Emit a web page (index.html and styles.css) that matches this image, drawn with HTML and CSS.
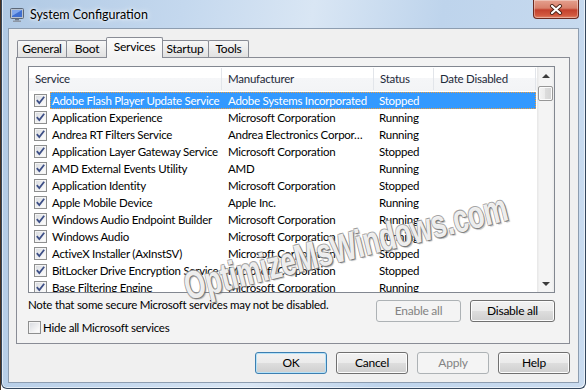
FILE: index.html
```html
<!DOCTYPE html>
<html>
<head>
<meta charset="utf-8">
<link rel="stylesheet" href="styles.css">
</head>
<body>
<div class="window">
  <div class="titlebar">
    <svg class="appicon" width="14" height="14" viewBox="0 0 14 14">
      <rect x="0.5" y="0.5" width="13" height="10" rx="1" fill="#b8c2cf" stroke="#5c6878"/>
      <rect x="2" y="2" width="10" height="7" fill="#3f6fd0"/>
      <path d="M2 2 L12 2 L2 8 Z" fill="#7fa6ec"/>
      <rect x="5" y="11" width="4" height="1.5" fill="#6b7686"/>
      <rect x="3" y="12.5" width="8" height="1.5" fill="#8d97a5"/>
    </svg>
    <span class="title">System Configuration</span>
    <div class="close">
      <svg width="14" height="11" viewBox="0 0 14 11">
        <path d="M3 2 L11 9 M11 2 L3 9" stroke="#4b2418" stroke-width="4" stroke-linecap="round"/>
        <path d="M3 2 L11 9 M11 2 L3 9" stroke="#ffffff" stroke-width="2.2" stroke-linecap="round"/>
      </svg>
    </div>
  </div>
  <div class="client">
    <div class="tabs">
      <div class="tab t-general">General</div>
      <div class="tab t-boot">Boot</div>
      <div class="tab t-services active">Services</div>
      <div class="tab t-startup">Startup</div>
      <div class="tab t-tools">Tools</div>
    </div>
    <div class="panel">
      <div class="listbox">
        <div class="lv">
          <div class="lv-head">
            <div class="h h-svc">Service</div>
            <div class="h h-man">Manufacturer</div>
            <div class="h h-st">Status</div>
            <div class="h h-date">Date Disabled</div>
          </div>
          <div class="lv-rows">
            <div class="row selected">
              <div class="cbcell"><span class="cb"><svg width="11" height="11" viewBox="0 0 11 11"><path d="M1.8 5.2 L4.3 8 L9.2 1.8" stroke="#3d4f86" stroke-width="1.8" fill="none"/></svg></span></div>
              <div class="cells"><div class="c c-svc">Adobe Flash Player Update Service</div><div class="c c-man">Adobe Systems Incorporated</div><div class="c c-st">Stopped</div><div class="c c-date"></div></div>
            </div>
            <div class="row">
              <div class="cbcell"><span class="cb"><svg width="11" height="11" viewBox="0 0 11 11"><path d="M1.8 5.2 L4.3 8 L9.2 1.8" stroke="#3d4f86" stroke-width="1.8" fill="none"/></svg></span></div>
              <div class="cells"><div class="c c-svc">Application Experience</div><div class="c c-man">Microsoft Corporation</div><div class="c c-st">Running</div><div class="c c-date"></div></div>
            </div>
            <div class="row">
              <div class="cbcell"><span class="cb"><svg width="11" height="11" viewBox="0 0 11 11"><path d="M1.8 5.2 L4.3 8 L9.2 1.8" stroke="#3d4f86" stroke-width="1.8" fill="none"/></svg></span></div>
              <div class="cells"><div class="c c-svc">Andrea RT Filters Service</div><div class="c c-man">Andrea Electronics Corpor…</div><div class="c c-st">Running</div><div class="c c-date"></div></div>
            </div>
            <div class="row">
              <div class="cbcell"><span class="cb"><svg width="11" height="11" viewBox="0 0 11 11"><path d="M1.8 5.2 L4.3 8 L9.2 1.8" stroke="#3d4f86" stroke-width="1.8" fill="none"/></svg></span></div>
              <div class="cells"><div class="c c-svc">Application Layer Gateway Service</div><div class="c c-man">Microsoft Corporation</div><div class="c c-st">Stopped</div><div class="c c-date"></div></div>
            </div>
            <div class="row">
              <div class="cbcell"><span class="cb"><svg width="11" height="11" viewBox="0 0 11 11"><path d="M1.8 5.2 L4.3 8 L9.2 1.8" stroke="#3d4f86" stroke-width="1.8" fill="none"/></svg></span></div>
              <div class="cells"><div class="c c-svc">AMD External Events Utility</div><div class="c c-man">AMD</div><div class="c c-st">Running</div><div class="c c-date"></div></div>
            </div>
            <div class="row">
              <div class="cbcell"><span class="cb"><svg width="11" height="11" viewBox="0 0 11 11"><path d="M1.8 5.2 L4.3 8 L9.2 1.8" stroke="#3d4f86" stroke-width="1.8" fill="none"/></svg></span></div>
              <div class="cells"><div class="c c-svc">Application Identity</div><div class="c c-man">Microsoft Corporation</div><div class="c c-st">Stopped</div><div class="c c-date"></div></div>
            </div>
            <div class="row">
              <div class="cbcell"><span class="cb"><svg width="11" height="11" viewBox="0 0 11 11"><path d="M1.8 5.2 L4.3 8 L9.2 1.8" stroke="#3d4f86" stroke-width="1.8" fill="none"/></svg></span></div>
              <div class="cells"><div class="c c-svc">Apple Mobile Device</div><div class="c c-man">Apple Inc.</div><div class="c c-st">Running</div><div class="c c-date"></div></div>
            </div>
            <div class="row">
              <div class="cbcell"><span class="cb"><svg width="11" height="11" viewBox="0 0 11 11"><path d="M1.8 5.2 L4.3 8 L9.2 1.8" stroke="#3d4f86" stroke-width="1.8" fill="none"/></svg></span></div>
              <div class="cells"><div class="c c-svc">Windows Audio Endpoint Builder</div><div class="c c-man">Microsoft Corporation</div><div class="c c-st">Running</div><div class="c c-date"></div></div>
            </div>
            <div class="row">
              <div class="cbcell"><span class="cb"><svg width="11" height="11" viewBox="0 0 11 11"><path d="M1.8 5.2 L4.3 8 L9.2 1.8" stroke="#3d4f86" stroke-width="1.8" fill="none"/></svg></span></div>
              <div class="cells"><div class="c c-svc">Windows Audio</div><div class="c c-man">Microsoft Corporation</div><div class="c c-st">Running</div><div class="c c-date"></div></div>
            </div>
            <div class="row">
              <div class="cbcell"><span class="cb"><svg width="11" height="11" viewBox="0 0 11 11"><path d="M1.8 5.2 L4.3 8 L9.2 1.8" stroke="#3d4f86" stroke-width="1.8" fill="none"/></svg></span></div>
              <div class="cells"><div class="c c-svc">ActiveX Installer (AxInstSV)</div><div class="c c-man">Microsoft Corporation</div><div class="c c-st">Stopped</div><div class="c c-date"></div></div>
            </div>
            <div class="row">
              <div class="cbcell"><span class="cb"><svg width="11" height="11" viewBox="0 0 11 11"><path d="M1.8 5.2 L4.3 8 L9.2 1.8" stroke="#3d4f86" stroke-width="1.8" fill="none"/></svg></span></div>
              <div class="cells"><div class="c c-svc">BitLocker Drive Encryption Service</div><div class="c c-man">Microsoft Corporation</div><div class="c c-st">Stopped</div><div class="c c-date"></div></div>
            </div>
            <div class="row">
              <div class="cbcell"><span class="cb"><svg width="11" height="11" viewBox="0 0 11 11"><path d="M1.8 5.2 L4.3 8 L9.2 1.8" stroke="#3d4f86" stroke-width="1.8" fill="none"/></svg></span></div>
              <div class="cells"><div class="c c-svc">Base Filtering Engine</div><div class="c c-man">Microsoft Corporation</div><div class="c c-st">Running</div><div class="c c-date"></div></div>
            </div>
          </div>
        </div>
        <div class="scrollbar">
          <div class="sb-arrow"><span class="tri-up"></span></div>
          <div class="sb-thumb"></div>
          <div class="sb-arrow sb-down"><span class="tri-down"></span></div>
        </div>
      </div>
      <div class="below">
        <div class="below-left">
          <div class="note">Note that some secure Microsoft services may not be disabled.</div>
          <div class="hide"><span class="cb"></span><span class="hide-label">Hide all Microsoft services</span></div>
        </div>
        <div class="below-btns">
          <div class="btn wide disabled">Enable all</div>
          <div class="btn wide">Disable all</div>
        </div>
      </div>
    </div>
    <div class="dlg-btns">
      <div class="btn default">OK</div>
      <div class="btn">Cancel</div>
      <div class="btn disabled">Apply</div>
      <div class="btn">Help</div>
    </div>
  </div>
</div>
<div class="watermark">OptimizeMsWindows.com</div>
</body>
</html>
```
FILE: styles.css
```css
html, body {
  margin: 0;
  padding: 0;
}
body {
  width: 586px;
  height: 390px;
  overflow: hidden;
  position: relative;
  background: linear-gradient(90deg, #4a3322 0, #4a3322 1px, #ffffff 1px);
  font-family: Lato, "Noto Sans", sans-serif;
  font-size: 11.5px;
  letter-spacing: -0.25px;
  color: #000;
}
.window {
  margin-left: 1px;
  width: 585px;
  height: 389px;
  box-sizing: border-box;
  border: 1px solid #34475d;
  border-top: 0;
  border-radius: 0 0 6px 6px;
  padding: 0 6px;
  background: linear-gradient(100deg, #b0c9e4 0%, #c4d8ee 28%, #d9e6f4 48%, #bed4ec 68%, #cadcf0 100%);
  box-shadow: inset 1px 0 0 rgba(255,255,255,0.6), inset -1px -1px 0 rgba(255,255,255,0.6);
}
.titlebar {
  height: 28px;
  display: flex;
  align-items: center;
  padding-left: 2px;
}
.appicon {
  flex: none;
  margin-top: 1px;
}
.title {
  margin-left: 6px;
  font-size: 12.5px;
  letter-spacing: 0;
  color: #000;
  text-shadow: 0 0 6px #fff, 0 0 3px #fff;
}
.close {
  margin-left: auto;
  align-self: flex-start;
  width: 46px;
  height: 19px;
  box-sizing: border-box;
  border: 1px solid #6b2a20;
  border-top: 0;
  border-radius: 0 0 4px 4px;
  background: linear-gradient(180deg, #e4a08e 0%, #d8806b 45%, #c3412d 55%, #d2593f 85%, #e0866a 100%);
  box-shadow: inset 0 0 0 1px rgba(255,255,255,0.35);
  display: flex;
  align-items: center;
  justify-content: center;
}
.client {
  height: 355px;
  box-sizing: border-box;
  border: 1px solid #8d9db0;
  background: #f0f0f0;
  padding: 8px 8px 0 7px;
}
.tabs {
  height: 20px;
  display: flex;
  align-items: flex-end;
  margin-left: 1px;
}
.tab {
  position: relative;
  height: 17px;
  box-sizing: border-box;
  border: 1px solid #898c95;
  border-bottom: 0;
  border-radius: 2px 2px 0 0;
  background: linear-gradient(180deg, #f7f7f7 0%, #ececec 50%, #e1e1e1 100%);
  text-align: center;
  line-height: 16px;
  font-size: 12px;
}
.t-general { width: 50px; }
.t-boot { width: 42px; margin-left: -1px; }
.t-services { width: 57px; margin-left: -2px; }
.t-startup { width: 48px; margin-left: -2px; }
.t-tools { width: 41px; margin-left: -1px; }
.tab.active {
  z-index: 2;
  height: 21px;
  margin-bottom: -1px;
  background: linear-gradient(180deg, #fbfbfb 0%, #f3f3f3 100%);
  line-height: 17px;
}
.panel {
  width: 554px;
  height: 287px;
  box-sizing: border-box;
  border: 1px solid #898c95;
  background: #f3f3f3;
  padding: 8px 0 0 11px;
}
.listbox {
  width: 527px;
  height: 227px;
  box-sizing: border-box;
  border: 1px solid #828790;
  background: #fff;
  display: flex;
}
.lv {
  flex: 1;
  overflow: hidden;
}
.lv-head {
  height: 24px;
  display: flex;
  background: linear-gradient(180deg, #ffffff 0%, #ffffff 45%, #f5f6f8 45%, #f3f4f6 100%);
}
.h {
  box-sizing: border-box;
  height: 22px;
  margin-top: 1px;
  padding-left: 6px;
  line-height: 22px;
  border-right: 1px solid #e2e5ea;
  color: #1e2a3a;
}
.h-svc { width: 193px; }
.h-man { width: 152px; }
.h-st { width: 60px; }
.h-date { width: 102px; }
.lv-rows {
  padding-top: 1px;
}
.row {
  height: 17px;
  display: flex;
}
.cbcell {
  width: 21px;
  box-sizing: border-box;
  padding-left: 5px;
  display: flex;
  align-items: center;
}
.cb {
  width: 13px;
  height: 13px;
  box-sizing: border-box;
  border: 1px solid #8e8f8f;
  background: linear-gradient(135deg, #d6d9de 0%, #f7f7f7 75%, #ffffff 100%);
  box-shadow: inset 0 0 0 1px #f4f4f4;
  display: flex;
  align-items: center;
  justify-content: center;
  flex: none;
}
.cb svg {
  display: block;
}
.cells {
  display: flex;
  height: 17px;
  box-sizing: border-box;
}
.c {
  box-sizing: border-box;
  height: 17px;
  line-height: 17px;
  white-space: nowrap;
  overflow: hidden;
}
.c-svc { width: 172px; padding-left: 2px; }
.c-man { width: 152px; padding-left: 6px; }
.c-st { width: 60px; padding-left: 5px; }
.c-date { width: 102px; }
.row.selected .cells {
  background: #3399ff;
  color: #fff;
  outline: 1px dotted #f0a040;
  outline-offset: -1px;
}
.scrollbar {
  width: 17px;
  flex: none;
  display: flex;
  flex-direction: column;
  align-items: center;
  background: linear-gradient(90deg, #e6e6e6 0%, #f4f4f4 15%, #f4f4f4 85%, #ececec 100%);
}
.sb-arrow {
  width: 17px;
  height: 17px;
  display: flex;
  align-items: center;
  justify-content: center;
}
.sb-down {
  margin-top: auto;
}
.tri-up {
  width: 0;
  height: 0;
  border-left: 4px solid transparent;
  border-right: 4px solid transparent;
  border-bottom: 4px solid #3c3c3c;
}
.tri-down {
  width: 0;
  height: 0;
  border-left: 4px solid transparent;
  border-right: 4px solid transparent;
  border-top: 4px solid #3c3c3c;
}
.sb-thumb {
  margin-top: 2px;
  width: 15px;
  height: 15px;
  box-sizing: border-box;
  border: 1px solid #979797;
  border-radius: 2px;
  background: linear-gradient(90deg, #f4f4f4 0%, #eaeaea 50%, #dcdcdc 50%, #d4d4d4 100%);
  box-shadow: inset 0 0 0 1px #fbfbfb;
}
.below {
  width: 527px;
  display: flex;
  justify-content: space-between;
  margin-top: 4px;
}
.note {
  line-height: 16px;
  height: 16px;
  white-space: nowrap;
}
.hide {
  margin-top: 8px;
  display: flex;
  align-items: center;
  height: 13px;
}
.hide-label {
  margin-left: 2px;
  line-height: 13px;
}
.below-btns {
  display: flex;
  gap: 9px;
  margin-top: 3px;
}
.btn {
  width: 72px;
  height: 22px;
  box-sizing: border-box;
  border: 1px solid #707070;
  border-radius: 3px;
  background: linear-gradient(180deg, #f2f2f2 0%, #ebebeb 48%, #dddddd 52%, #cfcfcf 100%);
  box-shadow: inset 0 0 0 1px #fcfcfc;
  text-align: center;
  line-height: 20px;
  font-size: 12px;
  color: #000;
}
.btn.wide {
  width: 85px;
}
.btn.disabled {
  border-color: #adb2b5;
  background: #f4f4f4;
  box-shadow: none;
  color: #838383;
}
.btn.default {
  border-color: #3c7fb1;
  box-shadow: inset 0 0 0 1px #b6e2f8;
}
.dlg-btns {
  display: flex;
  justify-content: flex-end;
  gap: 9px;
  margin-top: 8px;
}
.watermark {
  position: absolute;
  left: 188px;
  top: 268px;
  font-family: "Liberation Sans", Arial, sans-serif;
  font-weight: bold;
  font-size: 39px;
  line-height: 38px;
  letter-spacing: 0;
  white-space: nowrap;
  color: rgba(255, 255, 255, 0.9);
  text-shadow: 1px 1px 0 rgba(110,110,110,0.8), -1px -1px 0 rgba(150,150,150,0.7), 1px -1px 0 rgba(140,140,140,0.7), -1px 1px 0 rgba(140,140,140,0.7), 2px 2px 1px rgba(80,80,80,0.35);
  transform-origin: 0 32px;
  transform: rotate(-14deg) scaleX(0.69);
}
```
